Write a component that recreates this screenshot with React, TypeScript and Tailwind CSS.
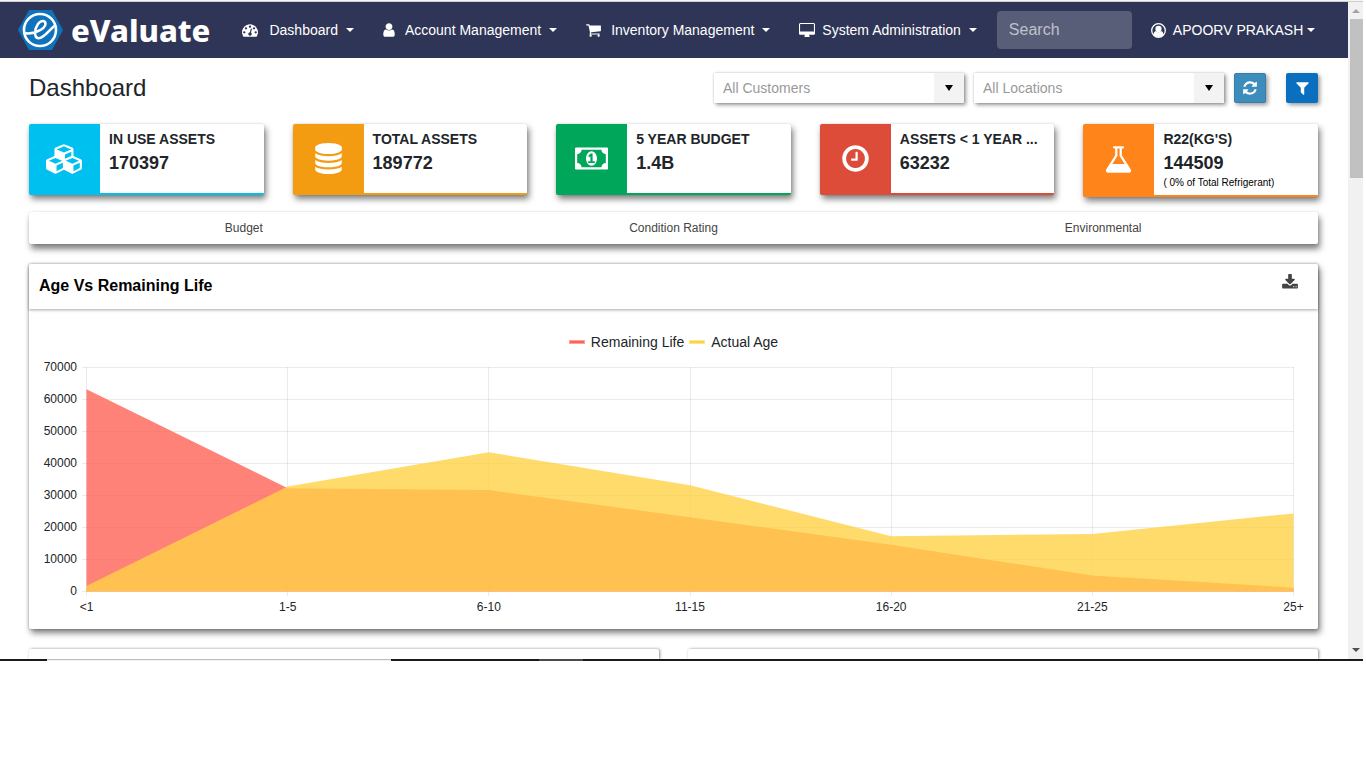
import type { ReactNode } from "react";

type Glyph = { box: string; d: string };

const glyphs: Record<string, Glyph> = {
  gauge: {
    box: "0 0 1792 1792",
    d: "M384 1152q0-53-37.5-90.5t-90.5-37.5-90.5 37.5-37.5 90.5 37.5 90.5 90.5 37.5 90.5-37.5 37.5-90.5zm192-448q0-53-37.5-90.5t-90.5-37.5-90.5 37.5-37.5 90.5 37.5 90.5 90.5 37.5 90.5-37.5 37.5-90.5zm428 481l101-382q6-26-7.5-48.5t-38.5-29.5-48 6.5-30 39.5l-101 382q-60 5-107 43.5t-63 98.5q-20 77 20 146t117 89 146-20 89-117q16-60-6-117t-72-91zm660-33q0-53-37.5-90.5t-90.5-37.5-90.5 37.5-37.5 90.5 37.5 90.5 90.5 37.5 90.5-37.5 37.5-90.5zm-640-640q0-53-37.5-90.5t-90.5-37.5-90.5 37.5-37.5 90.5 37.5 90.5 90.5 37.5 90.5-37.5 37.5-90.5zm448 192q0-53-37.5-90.5t-90.5-37.5-90.5 37.5-37.5 90.5 37.5 90.5 90.5 37.5 90.5-37.5 37.5-90.5zm320 448q0 261-141 483-19 29-54 29h-1402q-35 0-54-29-141-221-141-483 0-182 71-348t191-286 286-191 348-71 348 71 286 191 191 286 71 348z",
  },
  user: {
    box: "256 0 1280 1792",
    d: "M1536 1399q0 109-62.5 187t-150.5 78h-854q-88 0-150.5-78t-62.5-187q0-85 8.5-160.5t31.5-152 58.5-131 94-89 134.5-34.5q131 128 313 128t313-128q76 0 134.5 34.5t94 89 58.5 131 31.5 152 8.5 160.5zm-256-887q0 159-112.5 271.5t-271.5 112.5-271.5-112.5-112.5-271.5 112.5-271.5 271.5-112.5 271.5 112.5 112.5 271.5z",
  },
  cart: {
    box: "64 0 1664 1792",
    d: "M704 1536q0 52-38 90t-90 38-90-38-38-90 38-90 90-38 90 38 38 90zm896 0q0 52-38 90t-90 38-90-38-38-90 38-90 90-38 90 38 38 90zm128-1088v512q0 24-16.5 42.5t-40.5 21.5l-1044 122q13 60 13 70 0 16-24 64h920q26 0 45 19t19 45-19 45-45 19h-1024q-26 0-45-19t-19-45q0-11 8-31.5t16-36 21.5-40 15.5-29.5l-177-823h-204q-26 0-45-19t-19-45 19-45 45-19h256q16 0 28.5 6.5t19.5 15.5 13 24.5 8 26 5.5 29.5 4.5 26h1201q26 0 45 19t19 45z",
  },
  desktop: {
    box: "-64 0 1920 1792",
    d: "M1728 992v-832q0-13-9.5-22.5t-22.5-9.5h-1600q-13 0-22.5 9.5t-9.5 22.5v832q0 13 9.5 22.5t22.5 9.5h1600q13 0 22.5-9.5t9.5-22.5zm128-832v1088q0 66-47 113t-113 47h-544q0 37 16 77.5t32 71 16 43.5q0 26-19 45t-45 19h-512q-26 0-45-19t-19-45q0-14 16-44t32-70 16-78h-544q-66 0-113-47t-47-113v-1088q0-66 47-113t113-47h1600q66 0 113 47t47 113z",
  },
  database: {
    box: "128 0 1536 1792",
    d: "M896 768q237 0 443-43t325-127v170q0 69-103 128t-280 93.5-385 34.5-385-34.5-280-93.5-103-128v-170q119 84 325 127t443 43zm0 768q237 0 443-43t325-127v170q0 69-103 128t-280 93.5-385 34.5-385-34.5-280-93.5-103-128v-170q119 84 325 127t443 43zm0-384q237 0 443-43t325-127v170q0 69-103 128t-280 93.5-385 34.5-385-34.5-280-93.5-103-128v-170q119 84 325 127t443 43zm0-1152q208 0 385 34.5t280 93.5 103 128v128q0 69-103 128t-280 93.5-385 34.5-385-34.5-280-93.5-103-128v-128q0-69 103-128t280-93.5 385-34.5z",
  },
  money: {
    box: "0 0 1920 1792",
    d: "M768 1152h384v-96h-128v-448h-114l-148 137 77 80q42-37 55-57h2v288h-128v96zm512-256q0 70-21 142t-59.5 134-101.5 101-138 39-138-39-101.5-101-59.5-134-21-142 21-142 59.5-134 101.5-101 138-39 138 39 101.5 101 59.5 134 21 142zm512 256v-512q-106 0-181-75t-75-181h-1152q0 106-75 181t-181 75v512q106 0 181 75t75 181h1152q0-106 75-181t181-75zm128-832v1152q0 26-19 45t-45 19h-1792q-26 0-45-19t-19-45v-1152q0-26 19-45t45-19h1792q26 0 45 19t19 45z",
  },
  clock: {
    box: "128 0 1536 1792",
    d: "M1024 544v448q0 14-9 23t-23 9h-320q-14 0-23-9t-9-23v-64q0-14 9-23t23-9h224v-352q0-14 9-23t23-9h64q14 0 23 9t9 23zm416 352q0-148-73-273t-198-198-273-73-273 73-198 198-73 273 73 273 198 198 273 73 273-73 198-198 73-273zm224 0q0 209-103 385.5t-279.5 279.5-385.5 103-385.5-103-279.5-279.5-103-385.5 103-385.5 279.5-279.5 385.5-103 385.5 103 279.5 279.5 103 385.5z",
  },
  flask: {
    box: "64 0 1664 1792",
    d: "M1591 1448q56 89 21.5 152.5t-140.5 63.5h-1152q-106 0-140.5-63.5t21.5-152.5l503-793v-399h-64q-26 0-45-19t-19-45 19-45 45-19h512q26 0 45 19t19 45-19 45-45 19h-64v399zm-779-725l-272 429h712l-272-429-20-31v-436h-128v436z",
  },
  cubes: {
    box: "0 0 2304 1792",
    d: "M640 1632l384-192v-314l-384 164v342zm-64-454l404-173-404-173-404 173zm1088 454l384-192v-314l-384 164v342zm-64-454l404-173-404-173-404 173zm-448-293l384-165v-266l-384 164v267zm-64-379l441-189-441-189-441 189zm1088 518v416q0 36-19 67t-52 47l-448 224q-25 14-57 14t-57-14l-448-224q-4-2-7-4-2 2-7 4l-448 224q-25 14-57 14t-57-14l-448-224q-33-16-52-47t-19-67v-416q0-38 21.5-70t56.5-48l434-186v-400q0-38 21.5-70t56.5-48l448-192q23-10 50-10t50 10l448 192q35 16 56.5 48t21.5 70v400l434 186q36 16 57 48t21 70z",
  },
  refresh: {
    box: "128 0 1536 1792",
    d: "M1639 1056q0 5-1 7-64 268-268 434.5t-478 166.5q-146 0-282.5-55t-243.5-157l-129 129q-19 19-45 19t-45-19-19-45v-448q0-26 19-45t45-19h448q26 0 45 19t19 45-19 45l-137 137q71 66 161 102t187 36q134 0 250-65t186-179q11-17 53-117 8-23 30-23h192q13 0 22.5 9.5t9.5 22.5zm25-800v448q0 26-19 45t-45 19h-448q-26 0-45-19t-19-45 19-45l138-138q-148-137-349-137-134 0-250 65t-186 179q-11 17-53 117-8 23-30 23h-199q-13 0-22.5-9.5t-9.5-22.5v-7q65-268 270-434.5t480-166.5q146 0 284 55.5t245 156.5l130-129q19-19 45-19t45 19 19 45z",
  },
  filter: {
    box: "192 0 1408 1792",
    d: "M1595 295q17 41-14 70l-493 493v742q0 42-39 59-13 5-25 5-27 0-45-19l-256-256q-19-19-19-45v-486l-493-493q-31-29-14-70 17-39 59-39h1280q42 0 59 39z",
  },
  download: {
    box: "64 0 1664 1792",
    d: "M1344 1344q0-26-19-45t-45-19-45 19-19 45 19 45 45 19 45-19 19-45zm256 0q0-26-19-45t-45-19-45 19-19 45 19 45 45 19 45-19 19-45zm128-224v320q0 40-28 68t-68 28h-1472q-40 0-68-28t-28-68v-320q0-40 28-68t68-28h465l135 136q58 56 136 56t136-56l136-136h464q40 0 68 28t28 68zm-325-569q17 41-14 70l-448 448q-18 19-45 19t-45-19l-448-448q-31-29-14-70 17-39 59-39h256v-448q0-26 19-45t45-19h256q26 0 45 19t19 45v448h256q42 0 59 39z",
  },
};

function Icon({ name, className }: { name: string; className: string }) {
  const glyph = glyphs[name];
  return (
    <svg viewBox={glyph.box} className={className} fill="currentColor" aria-hidden="true">
      <path d={glyph.d} />
    </svg>
  );
}

function Caret() {
  return <span className="h-0 w-0 border-x-4 border-t-4 border-x-transparent border-t-current" />;
}

function Logo() {
  return (
    <a href="#home" className="flex shrink-0 items-center gap-2">
      <svg viewBox="0 0 45 40" className="h-10 w-[45px]" aria-hidden="true">
        <path d="M11 0H34L45 20L34 40H11L0 20Z" fill="#0f72bd" />
        <circle cx="22" cy="20" r="16" fill="none" stroke="#fff" strokeWidth="2.6" />
        <path
          d="M6.500 23C14 25 27 19.500 27.500 14C27.500 10 23 10 20 14C16.500 19 15.500 27.500 20.500 28.200C26 28.500 31 20 37 15.500"
          fill="none"
          stroke="#fff"
          strokeWidth="2.6"
          strokeLinecap="round"
        />
      </svg>
      <span className="font-['Noto_Sans',sans-serif] text-[31px] leading-[36px] font-extrabold">eValuate</span>
    </a>
  );
}

function NavItem({ icon, size, gap, label }: { icon: string; size: string; gap: string; label: string }) {
  return (
    <button type="button" className={`flex items-center whitespace-nowrap ${gap}`}>
      <Icon name={icon} className={size} />
      <span className="flex items-center gap-2">
        {label}
        <Caret />
      </span>
    </button>
  );
}

function Picker({ label }: { label: string }) {
  return (
    <div className="relative h-[30px] w-[250px] bg-white shadow-[2px_2px_4px_rgba(0,0,0,0.4),0_0_2px_rgba(0,0,0,0.2)]">
      <select
        aria-label={label}
        className="h-full w-full appearance-none bg-transparent pr-8 pl-[9px] text-sm text-[#999] outline-none"
      >
        <option>{label}</option>
      </select>
      <span className="pointer-events-none absolute inset-y-0 right-0 flex w-[30px] items-center justify-center bg-[#f3f3f3] text-black">
        <span className="h-0 w-0 border-x-4 border-t-6 border-x-transparent border-t-current" />
      </span>
    </div>
  );
}

type Stat = { icon: string; size: string; label: string; value: string; note?: string; fill: string; edge: string };

const stats: Stat[] = [
  { icon: "cubes", size: "h-[30px] w-[38px]", label: "IN USE ASSETS", value: "170397", fill: "bg-[#00c0ef]", edge: "border-[#00c0ef]" },
  { icon: "database", size: "h-[31px] w-[27px]", label: "TOTAL ASSETS", value: "189772", fill: "bg-[#f39c12]", edge: "border-[#f39c12]" },
  { icon: "money", size: "h-[31px] w-[33px]", label: "5 YEAR BUDGET", value: "1.4B", fill: "bg-[#00a65a]", edge: "border-[#00a65a]" },
  { icon: "clock", size: "h-[31px] w-[27px]", label: "ASSETS < 1 YEAR ...", value: "63232", fill: "bg-[#dd4b39]", edge: "border-[#dd4b39]" },
  { icon: "flask", size: "h-[31px] w-[29px]", label: "R22(KG'S)", value: "144509", note: "( 0% of Total Refrigerant)", fill: "bg-[#ff851b]", edge: "border-[#ff851b]" },
];

function StatCard({ stat }: { stat: Stat }) {
  return (
    <article
      className={`flex overflow-hidden rounded-xs border-b-2 bg-white shadow-[2px_4px_6px_rgba(0,0,0,0.5),0_0_2px_rgba(0,0,0,0.15)] ${stat.edge} ${stat.note ? "h-[73px]" : "h-[71px]"}`}
    >
      <div className={`flex w-[71px] shrink-0 items-center justify-center text-white ${stat.fill}`}>
        <Icon name={stat.icon} className={stat.size} />
      </div>
      <div className="min-w-0 flex-1 pt-1.5 pr-2 pl-[9px] font-bold text-[#212529]">
        <h2 className="text-sm leading-[18px] whitespace-nowrap">{stat.label}</h2>
        <p className="text-lg leading-[30px]">{stat.value}</p>
        {stat.note && <p className="text-[10px] leading-[10px] font-normal whitespace-nowrap text-black">{stat.note}</p>}
      </div>
    </article>
  );
}

const groups = ["<1", "1-5", "6-10", "11-15", "16-20", "21-25", "25+"];
const remaining = [63232, 32300, 31700, 23200, 14600, 5000, 1200];
const actual = [1700, 32800, 43500, 33200, 17300, 18000, 24400];
const ticks = [0, 10000, 20000, 30000, 40000, 50000, 60000, 70000];

const chartX = (i: number) => 57.5 + i * 201.17;
const chartY = (v: number) => 239.5 - v * 0.0032;
const area = (values: number[]) =>
  `M${chartX(0)} ${chartY(0)} ` + values.map((v, i) => `L${chartX(i)} ${chartY(v)}`).join(" ") + ` L${chartX(6)} ${chartY(0)}Z`;

function AgeChart() {
  return (
    <svg viewBox="0 0 1289 277" className="block w-full" role="img" aria-label="Age Vs Remaining Life">
      <g stroke="#000" strokeOpacity="0.08" shapeRendering="crispEdges">
        {ticks.map((t) => (
          <line key={t} x1="53" x2="1264.500" y1={chartY(t)} y2={chartY(t)} />
        ))}
        {groups.map((g, i) => (
          <line key={g} x1={chartX(i)} x2={chartX(i)} y1="15" y2="244" />
        ))}
      </g>
      <path d={area(remaining)} fill="#ff6358" fillOpacity="0.8" />
      <path d={area(actual)} fill="#ffd246" fillOpacity="0.8" />
      <g fill="#212529" fontSize="12">
        {ticks.map((t) => (
          <text key={t} x="48" y={chartY(t) + 3.5} textAnchor="end">
            {t}
          </text>
        ))}
        {groups.map((g, i) => (
          <text key={g} x={chartX(i)} y="259" textAnchor="middle">
            {g}
          </text>
        ))}
      </g>
    </svg>
  );
}

function LegendItem({ swatch, children }: { swatch: string; children: ReactNode }) {
  return (
    <li className="flex items-center gap-1.5">
      <span className={`h-1 w-4 border ${swatch}`} />
      {children}
    </li>
  );
}

function ScrollBar() {
  return (
    <div className="flex w-[15px] shrink-0 flex-col items-center bg-[#f1f1f1]" aria-hidden="true">
      <span className="mt-[7px] h-0 w-0 border-x-4 border-b-4 border-x-transparent border-b-[#a3a3a3]" />
      <span className="mt-1.5 ml-px h-[159px] w-[13px] bg-[#c1c1c1]" />
      <span className="mt-auto mb-[7px] h-0 w-0 border-x-4 border-t-4 border-x-transparent border-t-[#505050]" />
    </div>
  );
}

export default function App() {
  return (
    <div className="min-h-screen bg-white pr-[3px] font-['Liberation_Sans',Arial,sans-serif] text-sm text-[#212529]">
      <div className="h-0.5 border-b border-[#cfcfcf] bg-[#f4f4f4]" />
      <div className="flex">
        <div className="min-w-0 flex-1">
          <header className="flex h-14 items-center bg-[#2f3556] pr-[34px] pl-[18px] text-white">
            <Logo />
            <nav className="ml-8 flex flex-1 items-center justify-end gap-[29px]" aria-label="Main">
              <NavItem icon="gauge" size="h-4 w-4" gap="gap-[11px]" label="Dashboard" />
              <NavItem icon="user" size="h-4 w-3" gap="gap-2.5" label="Account Management" />
              <NavItem icon="cart" size="h-4 w-[15px]" gap="gap-2.5" label="Inventory Management" />
              <NavItem icon="desktop" size="h-[15px] w-4" gap="gap-[7px]" label="System Administration" />
            </nav>
            <input
              type="search"
              aria-label="Search"
              placeholder="Search"
              className="ml-5 h-[38px] w-[135px] rounded-sm bg-[#595e78] px-3 text-base text-white outline-none placeholder:text-[#bfc1cb]"
            />
            <button type="button" className="ml-[19px] flex items-center gap-[7px] whitespace-nowrap">
              <svg viewBox="0 0 15 15" className="h-[15px] w-[15px]" aria-hidden="true">
                <circle cx="7.5" cy="7.5" r="6.8" fill="none" stroke="currentColor" strokeWidth="1.3" />
                <circle cx="7.5" cy="5.900" r="3.100" fill="currentColor" />
                <path d="M2.400 12Q2.800 8.500 4.800 8.100Q7.500 10.200 10.200 8.100Q12.200 8.500 12.600 12Q10 14 7.500 14T2.400 12Z" fill="currentColor" />
              </svg>
              <span className="flex items-center gap-1">
                APOORV PRAKASH
                <Caret />
              </span>
            </button>
          </header>

          <main className="pt-[15px] pr-[30px] pl-[29px]">
            <div className="flex h-[30px] items-center">
              <h1 className="flex-1 text-2xl leading-7">Dashboard</h1>
              <div className="flex items-center gap-2.5">
                <Picker label="All Customers" />
                <Picker label="All Locations" />
                <button
                  type="button"
                  aria-label="Refresh"
                  className="flex h-[30px] w-8 items-center justify-center rounded-xs border border-[#367fa9] bg-[#3c8dbc] text-white shadow-[2px_2px_4px_rgba(0,0,0,0.4)]"
                >
                  <Icon name="refresh" className="h-4 w-3.5" />
                </button>
                <button
                  type="button"
                  aria-label="Filter"
                  className="ml-2.5 flex h-[30px] w-8 items-center justify-center rounded-xs bg-[#0b6fbf] text-white shadow-[2px_2px_4px_rgba(0,0,0,0.4)]"
                >
                  <Icon name="filter" className="h-4 w-[13px]" />
                </button>
              </div>
            </div>

            <section className="mt-[21px] grid grid-cols-5 items-start gap-[29px]" aria-label="Totals">
              {stats.map((s) => (
                <StatCard key={s.label} stat={s} />
              ))}
            </section>

            <div className="mt-[15px] grid h-8 grid-cols-3 rounded-xs bg-white text-xs text-[#444] shadow-[2px_5px_6px_rgba(0,0,0,0.5),0_0_2px_rgba(0,0,0,0.15)]">
              <button type="button">Budget</button>
              <button type="button">Condition Rating</button>
              <button type="button">Environmental</button>
            </div>

            <section className="mt-5 rounded-xs bg-white shadow-[2px_4px_6px_rgba(0,0,0,0.5),0_0_3px_rgba(0,0,0,0.3)]">
              <div className="flex h-[45px] items-start justify-between pt-2.5 pr-5 pl-2.5 shadow-[0_1px_3px_rgba(0,0,0,0.35)]">
                <h2 className="text-base leading-6 font-bold text-black">Age Vs Remaining Life</h2>
                <button type="button" aria-label="Download" className="text-[#444]">
                  <Icon name="download" className="h-[17px] w-4" />
                </button>
              </div>
              <ul className="flex justify-center gap-[5px] pt-[23px] leading-5">
                <LegendItem swatch="border-[#ffa19b] bg-[#ff6358]">Remaining Life</LegendItem>
                <LegendItem swatch="border-[#ffe490] bg-[#ffd246]">Actual Age</LegendItem>
              </ul>
              <AgeChart />
            </section>

            <div className="mt-5 flex h-2.5 gap-[29px]">
              <div className="flex-1 rounded-t-xs bg-white shadow-[1px_0_3px_rgba(0,0,0,0.45)]" />
              <div className="flex-1 rounded-t-xs bg-white shadow-[1px_0_3px_rgba(0,0,0,0.45)]" />
            </div>
          </main>
        </div>
        <ScrollBar />
      </div>
      <div className="relative flex h-0.5 bg-[#1b1b1b]">
        <span className="ml-[47px] w-[344px] border-b border-[#f4f4f4] bg-[#bdbdbd]" />
        <span className="ml-[148px] w-11 bg-[#4a4a4a]" />
      </div>
      <div className="relative h-5 bg-white" />
    </div>
  );
}
